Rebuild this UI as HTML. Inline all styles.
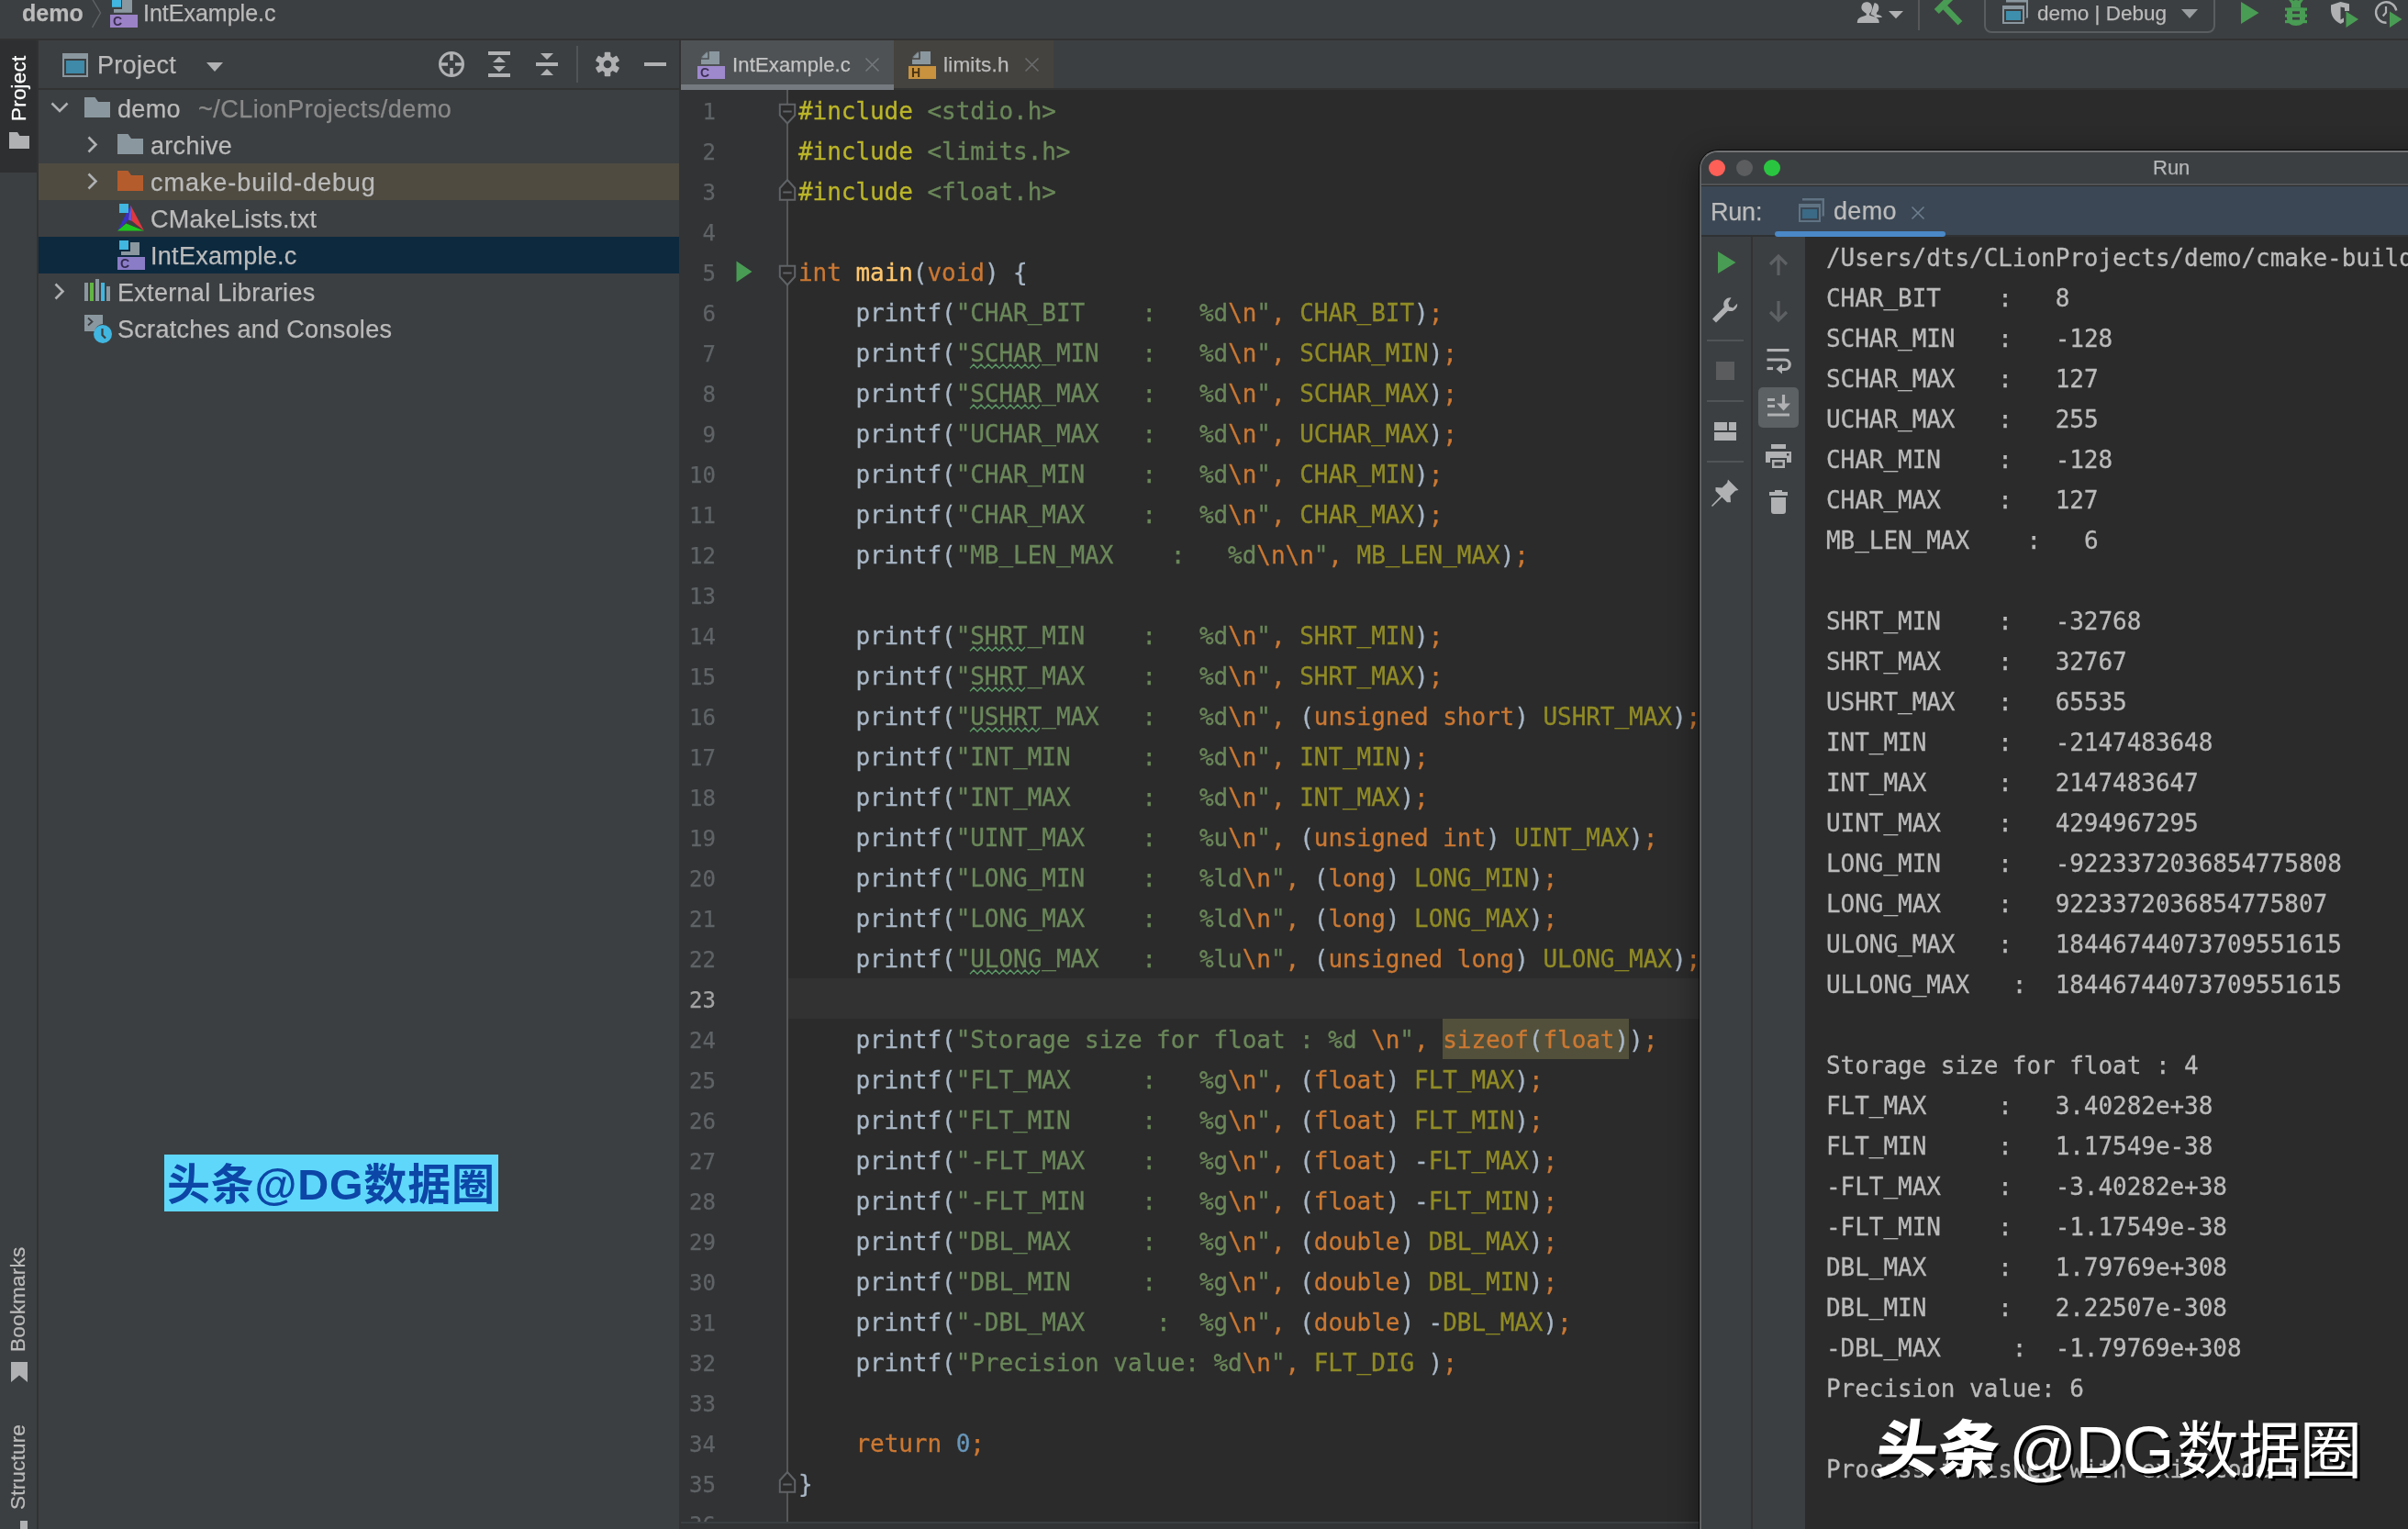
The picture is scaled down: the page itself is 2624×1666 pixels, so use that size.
<!DOCTYPE html>
<html lang="zh"><head><meta charset="utf-8"><title>demo – IntExample.c</title>
<style>
*{box-sizing:border-box}
html,body{margin:0;padding:0}
body{width:2624px;height:1666px;overflow:hidden;position:relative;background:#3c3f41;font-family:"Liberation Sans","Noto Sans CJK SC",sans-serif;color:#bbbbbb;font-size:27px;letter-spacing:.3px;-webkit-text-stroke:.25px currentColor}
#root{position:absolute;left:0;top:0;width:2624px;height:1666px;overflow:hidden;will-change:transform}
.abs{position:absolute}
.t{position:absolute;white-space:pre;line-height:1}
svg{position:absolute;overflow:visible}
/* nav */
#nav{left:0;top:0;width:2624px;height:44px;background:#3c3f41;border-bottom:2px solid #323232}
/* stripe */
#stripe{left:0;top:44px;width:42px;height:1622px;background:#3c3f41;border-right:2px solid #323232}
#stripeact{left:0;top:44px;width:40px;height:144px;background:#2d2f30}
.vt{position:absolute;white-space:pre;transform-origin:0 0;transform:rotate(-90deg);font-size:24px;line-height:24px;letter-spacing:.2px}
/* project */
#proj{left:42px;top:44px;width:700px;height:1622px;background:#3c3f41;border-right:2px solid #323232}
#projhead{left:42px;top:44px;width:698px;height:54px;border-bottom:2px solid #323232}
.row{position:absolute;left:42px;width:698px;height:40px}
.rt{position:absolute;top:4px;line-height:32px;white-space:pre}
/* editor */
#tabs{left:742px;top:44px;width:1882px;height:54px;background:#3c3f41;border-bottom:2px solid #323232}
#tab1{left:742px;top:44px;width:232px;height:54px;background:#4e5254;border-bottom:6px solid #747a80}
#tab2{left:974px;top:44px;width:174px;height:52px;background:#45433f}
#gutter{left:740px;top:98px;width:118px;height:1560px;background:#313335}
#ed{left:858px;top:98px;width:1766px;height:1560px;background:#2b2b2b}
#foldline{left:857px;top:98px;width:2px;height:1560px;background:#555759}
.ln{position:absolute;left:742px;width:38px;text-align:right;font-family:"DejaVu Sans Mono","Liberation Mono",monospace;font-size:24px;letter-spacing:0;color:#606366;line-height:44px;height:44px;white-space:pre}
.cl{position:absolute;left:870px;font-family:"DejaVu Sans Mono","Liberation Mono",monospace;font-size:26px;letter-spacing:-.05px;color:#a9b7c6;line-height:44px;height:44px;white-space:pre}
.cl,.co{-webkit-text-stroke:.3px currentColor}
.cl span{-webkit-text-stroke:.3px currentColor}
.k{color:#cc7832}.s{color:#6a8759}.m{color:#908b25}.p{color:#bbb529}.f{color:#ffc66d}.n{color:#6897bb}
.u{position:relative;top:-2.5px}
.w{background:#52503a;padding:8px 0 6px}
.sq{text-decoration:underline wavy #5fa36a 1.2px;text-underline-offset:3.5px;text-decoration-skip-ink:none}
#edbot{left:742px;top:1658px;width:1882px;height:8px;background:#313335;border-top:2px solid #3c3f41}
/* run window */
#runshadow{left:1852px;top:164px;width:900px;height:1700px;border-radius:20px;box-shadow:0 0 0 1px rgba(0,0,0,.75),0 8px 30px 2px rgba(0,0,0,.42)}
#run{left:1852px;top:164px;width:900px;height:1700px;border-radius:20px 0 0 0;background:#2b2b2b;overflow:hidden;border-top:2px solid #707274;border-left:2px solid #5f6163}
.co{position:absolute;left:1990px;font-family:"DejaVu Sans Mono","Liberation Mono",monospace;font-size:26px;letter-spacing:-.05px;color:#bbbbbb;line-height:44px;height:44px;white-space:pre}
</style></head>
<body>
<div id="root">
<!-- navigation bar -->
<div class="abs" id="nav"></div>
<div class="t" style="left:24px;top:0px;font-size:25px;line-height:28px;font-weight:bold;letter-spacing:0">demo</div>
<svg style="left:98px;top:0" width="16" height="32"><polyline points="2,-2 11.5,14 2.5,30" fill="none" stroke="#5e6366" stroke-width="1.4"/></svg>
<svg style="left:120px;top:0" width="30" height="30"><rect x="4" y="-4" width="20" height="17.8" fill="#8a979f"/><rect x="0" y="-4" width="13" height="14" fill="#3c3f41"/><rect x="2" y="-4" width="10" height="11.8" fill="#40b6e0"/><rect x="0" y="16" width="30" height="14" fill="#9b82c6"/><text x="3" y="28" font-family="Liberation Sans,sans-serif" font-weight="bold" font-size="14" fill="#3c2d52">C</text></svg>
<div class="t" style="left:156px;top:0px;font-size:25px;line-height:28px;letter-spacing:0">IntExample.c</div>
<svg style="left:2022px;top:0" width="56" height="30" fill="#afb1b3"><path d="M20.5 3.2c3 0 4.8 2.2 4.8 5.2 0 2.3-1 4.3-2.3 5.3l-.2 1.7c3.2.9 5.6 1.4 6.2 3.5h-7.6c-.9-1.7-3-2.5-5-3.1z"/><path d="M12.2 2.2c3.600 0 5.8 2.600 5.8 6.200 0 2.800-1.300 5.100-2.900 6.300l.2 2.100c4.400 1.300 9.300 2.100 10.100 5.600.2.900.3 1.700.3 2.600H1.800c0-.9.100-1.700.3-2.600.8-3.500 5.100-4.300 9.500-5.600l.2-2.100C10.200 13.500 6.400 11.200 6.400 8.400c0-3.600 2.200-6.200 5.800-6.200z"/><path d="M36 12h16l-8 8.300z"/></svg>
<div class="abs" style="left:2090px;top:0;width:2px;height:33px;background:#555759"></div>
<svg style="left:2106px;top:0" width="34" height="30"><g stroke="#499c54" fill="none"><path d="M4.300 12.500L21 -4" stroke-width="7.200"/><path d="M13.500 8L30 25.300" stroke-width="6.600"/></g></svg>
<div class="abs" style="left:2162px;top:-10px;width:252px;height:46px;border:2px solid #5a5d5f;border-radius:8px"></div>
<svg style="left:2182px;top:0" width="30" height="28"><rect x="4" y="-4" width="24" height="23.500" fill="#8a979f"/><rect x="4" y="2.500" width="22" height="17" fill="#3c3f41"/><rect x="0" y="6" width="24" height="20" fill="#8a979f"/><rect x="2" y="10" width="20" height="14" fill="#3c3f41"/><rect x="4" y="12" width="16" height="10" fill="#3e8fad"/></svg>
<div class="t" style="left:2220px;top:2px;font-size:22.5px;line-height:26px;letter-spacing:0">demo | Debug</div>
<svg style="left:2377px;top:10px" width="18" height="10"><path d="M0 0h18l-9 10z" fill="#9a9da0"/></svg>
<svg style="left:2441px;top:0" width="22" height="28"><path d="M1 2l19.500 12L1 26z" fill="#499c54"/></svg>
<svg style="left:2489px;top:0" width="26" height="30"><g fill="#499c54"><path d="M6.500 8.500h13c2.200 0 3.500 2 3.500 5v6c0 5-4.500 8.500-10 8.500S3 24.500 3 19.500v-6c0-3 1.300-5 3.500-5z"/><path d="M8 4.500a5 4.500 0 0 1 10 0v4H8z"/><path d="M6.500 -1l5 7M19.500 -1l-5 7" stroke="#499c54" stroke-width="3.400" fill="none"/><rect x="1" y="8.500" width="24" height="3.200"/><rect x="1" y="15.500" width="24" height="3.200"/><rect x="1" y="22" width="24" height="3.200"/></g><rect x="9" y="12.300" width="8" height="2.800" fill="#3c3f41"/><rect x="9" y="18.800" width="8" height="2.800" fill="#3c3f41"/></svg>
<svg style="left:2539px;top:0" width="32" height="32"><path d="M1 5.500L11.500 2 21 4.300V12h-5V8.500l-4.500-1V21.500l3.500-2v4.500L11.500 26C4.500 22.500 1 17 1 10z" fill="#afb1b3"/><path d="M17.500 12.500L31 21l-13.500 9z" fill="#499c54"/></svg>
<svg style="left:2587px;top:0" width="32" height="32"><path d="M24.300 11.500A11.200 11.200 0 1 0 13.500 24.700" fill="none" stroke="#afb1b3" stroke-width="2.400"/><path d="M13 7v6.700l-3.300 3.800" fill="none" stroke="#afb1b3" stroke-width="2.200"/><path d="M17 12.500L30.500 21 17 30z" fill="#499c54"/></svg>
<!-- left tool window stripe -->
<div class="abs" id="stripe"></div>
<div class="abs" id="stripeact"></div>
<div class="vt" style="left:8.5px;top:132px;color:#ffffff;font-size:22.5px">Project</div>
<svg style="left:10px;top:144px" width="22" height="18"><path d="M0 0h9l2.500 4H22v14H0z" fill="#afb1b3"/></svg>
<div class="vt" style="left:8px;top:1473px;color:#bbbbbb;font-size:22.5px">Bookmarks</div>
<svg style="left:12px;top:1484px" width="18" height="22"><path d="M0 0h18v22l-9-7.500L0 22z" fill="#afb1b3"/></svg>
<div class="vt" style="left:8px;top:1645px;color:#bbbbbb;font-size:22.5px">Structure</div>
<svg style="left:14px;top:1657px" width="18" height="10"><rect x="8" y="0" width="8" height="10" fill="#afb1b3"/></svg>
<!-- project tool window -->
<div class="abs" id="proj"></div>
<div class="abs" id="projhead"></div>
<svg style="left:68px;top:58px" width="28" height="26"><rect width="28" height="26" fill="#8a979f"/><rect x="2" y="6" width="24" height="18" fill="#3c3f41"/><rect x="4" y="8" width="20" height="14" fill="#3e8aa8"/></svg>
<div class="t" style="left:106px;top:55px;line-height:32px">Project</div>
<svg style="left:225px;top:68px" width="18" height="10"><path d="M0 0h18l-9 10z" fill="#afb1b3"/></svg>
<svg style="left:478px;top:56px" width="28" height="28"><g fill="none" stroke="#afb1b3" stroke-width="3"><circle cx="14" cy="14" r="12.500"/><path d="M14 1v9M14 18v9M1 14h9M18 14h9" stroke-width="3.600"/></g></svg>
<svg style="left:532px;top:56px" width="24" height="28" fill="#afb1b3"><rect x="0" y="0" width="24" height="4"/><rect x="0" y="24" width="24" height="4"/><path d="M5 12h14L12 5.500z"/><path d="M5 16h14l-7 6.500z"/></svg>
<svg style="left:584px;top:57px" width="24" height="26" fill="#afb1b3"><rect x="0" y="11" width="24" height="4"/><path d="M5 1h14l-7 7z"/><path d="M5 25h14l-7-7z"/></svg>
<div class="abs" style="left:628px;top:50px;width:2px;height:40px;background:#515456"></div>
<svg style="left:649px;top:56px" width="26" height="28" viewBox="-13 -14 26 28"><g fill="#afb1b3"><circle r="9.200"/><rect x="-3.300" y="-13.300" width="6.600" height="7" rx="1" transform="rotate(0)"/><rect x="-3.300" y="-13.300" width="6.600" height="7" rx="1" transform="rotate(60)"/><rect x="-3.300" y="-13.300" width="6.600" height="7" rx="1" transform="rotate(120)"/><rect x="-3.300" y="-13.300" width="6.600" height="7" rx="1" transform="rotate(180)"/><rect x="-3.300" y="-13.300" width="6.600" height="7" rx="1" transform="rotate(240)"/><rect x="-3.300" y="-13.300" width="6.600" height="7" rx="1" transform="rotate(300)"/></g><circle r="4.300" fill="#3c3f41"/></svg>
<div class="abs" style="left:702px;top:68px;width:24px;height:4px;background:#afb1b3"></div>
<div class="row" style="top:178px;background:#4f4b41"></div>
<div class="row" style="top:258px;background:#0d293e"></div>
<svg style="left:55px;top:111px" width="20" height="12"><polyline points="1.500,1.500 10,10 18.500,1.500" fill="none" stroke="#afb1b3" stroke-width="2.600"/></svg><svg style="left:92px;top:106px" width="28" height="22"><path d="M0 0h11.500l3.500 5H28v17H0z" fill="#8a979f"/></svg><div class="t" style="left:128px;top:103px;line-height:32px">demo</div><div class="t" style="left:216px;top:103px;line-height:32px;color:#8a8a8a;letter-spacing:0.5px">~/CLionProjects/demo</div>
<svg style="left:95px;top:148px" width="12" height="19"><polyline points="1.500,1.500 9.500,9.500 1.500,17.500" fill="none" stroke="#afb1b3" stroke-width="2.600"/></svg><svg style="left:128px;top:146px" width="28" height="22"><path d="M0 0h11.500l3.500 5H28v17H0z" fill="#8a979f"/></svg><div class="t" style="left:164px;top:143px;line-height:32px">archive</div>
<svg style="left:95px;top:188px" width="12" height="19"><polyline points="1.500,1.500 9.500,9.500 1.500,17.500" fill="none" stroke="#afb1b3" stroke-width="2.600"/></svg><svg style="left:128px;top:186px" width="28" height="22"><path d="M0 0h11.500l3.500 5H28v17H0z" fill="#b55c2c"/></svg><div class="t" style="left:164px;top:183px;line-height:32px;letter-spacing:0.95px">cmake-build-debug</div>
<svg style="left:128px;top:222px" width="30" height="30"><path d="M14.200 1.500L0 29.500l12-12z" fill="#3a30c8"/><path d="M14.200 1.500L16 19l13 10.500z" fill="#e0383e"/><path d="M0 29.500h29L9.500 21.500z" fill="#1ec81e"/><path d="M14.200 1.500l1.800 17.500-4-1.500z" fill="#6a55d8"/><rect x="2" y="0" width="10" height="10" fill="#40b6e0"/></svg><div class="t" style="left:164px;top:223px;line-height:32px">CMakeLists.txt</div>
<svg style="left:128px;top:262px" width="30" height="32"><rect x="4" y="2" width="20" height="14" fill="#8a979f"/><rect x="0" y="0" width="14" height="12" fill="#0d293e"/><rect x="2" y="0" width="10" height="10" fill="#40b6e0"/><rect x="0" y="18" width="30" height="14" fill="#8a7cc6"/><text x="3" y="30" font-family="Liberation Sans,sans-serif" font-weight="bold" font-size="14" fill="#332a52">C</text></svg><div class="t" style="left:164px;top:263px;line-height:32px">IntExample.c</div>
<svg style="left:59px;top:308px" width="12" height="19"><polyline points="1.500,1.500 9.500,9.500 1.500,17.500" fill="none" stroke="#afb1b3" stroke-width="2.600"/></svg><svg style="left:92px;top:303px" width="28" height="26"><rect x="0" y="5" width="4" height="20" fill="#8a979f"/><rect x="6" y="5" width="4" height="20" fill="#62b543"/><rect x="12" y="1" width="4" height="24" fill="#8a979f"/><rect x="18" y="5" width="4" height="20" fill="#40b6e0"/><rect x="24" y="9" width="4" height="16" fill="#8a979f"/></svg><div class="t" style="left:128px;top:303px;line-height:32px">External Libraries</div>
<svg style="left:92px;top:343px" width="32" height="32"><path d="M0 0h20v10a10 10 0 0 0 -9 8H0z" fill="#8a979f"/><polyline points="4,3.500 8.500,7.500 4,11.500" fill="none" stroke="#3c3f41" stroke-width="1.800"/><circle cx="20" cy="21" r="10" fill="#40b6e0"/><path d="M19.500 15v7l3.500 3.500" fill="none" stroke="#3c3f41" stroke-width="2.200"/></svg><div class="t" style="left:128px;top:343px;line-height:32px">Scratches and Consoles</div>
<!-- editor -->
<div class="abs" id="tabs"></div>
<div class="abs" id="tab1"></div>
<div class="abs" id="tab2"></div>
<div class="abs" id="gutter"></div>
<div class="abs" id="ed"></div>
<div class="abs" style="left:858px;top:1066px;width:1766px;height:44px;background:#323232"></div>
<div class="abs" id="foldline"></div>
<div class="ln" style="top:100px">1</div><div class="cl" style="top:99px"><span class="p">#include</span> <span class="s">&lt;stdio.h&gt;</span></div>
<div class="ln" style="top:144px">2</div><div class="cl" style="top:143px"><span class="p">#include</span> <span class="s">&lt;limits.h&gt;</span></div>
<div class="ln" style="top:188px">3</div><div class="cl" style="top:187px"><span class="p">#include</span> <span class="s">&lt;float.h&gt;</span></div>
<div class="ln" style="top:232px">4</div>
<div class="ln" style="top:276px">5</div><div class="cl" style="top:275px"><span class="k">int</span> <span class="f">main</span>(<span class="k">void</span>) {</div>
<div class="ln" style="top:320px">6</div><div class="cl" style="top:319px">    printf(<span class="s">"CHAR<span class="u">_</span>BIT    :   %d</span><span class="k">\n</span><span class="s">"</span><span class="k">,</span> <span class="m">CHAR<span class="u">_</span>BIT</span>)<span class="k">;</span></div>
<div class="ln" style="top:364px">7</div><div class="cl" style="top:363px">    printf(<span class="s">"SCHAR<span class="u">_</span>MIN   :   %d</span><span class="k">\n</span><span class="s">"</span><span class="k">,</span> <span class="m">SCHAR<span class="u">_</span>MIN</span>)<span class="k">;</span></div>
<div class="ln" style="top:408px">8</div><div class="cl" style="top:407px">    printf(<span class="s">"SCHAR<span class="u">_</span>MAX   :   %d</span><span class="k">\n</span><span class="s">"</span><span class="k">,</span> <span class="m">SCHAR<span class="u">_</span>MAX</span>)<span class="k">;</span></div>
<div class="ln" style="top:452px">9</div><div class="cl" style="top:451px">    printf(<span class="s">"UCHAR<span class="u">_</span>MAX   :   %d</span><span class="k">\n</span><span class="s">"</span><span class="k">,</span> <span class="m">UCHAR<span class="u">_</span>MAX</span>)<span class="k">;</span></div>
<div class="ln" style="top:496px">10</div><div class="cl" style="top:495px">    printf(<span class="s">"CHAR<span class="u">_</span>MIN    :   %d</span><span class="k">\n</span><span class="s">"</span><span class="k">,</span> <span class="m">CHAR<span class="u">_</span>MIN</span>)<span class="k">;</span></div>
<div class="ln" style="top:540px">11</div><div class="cl" style="top:539px">    printf(<span class="s">"CHAR<span class="u">_</span>MAX    :   %d</span><span class="k">\n</span><span class="s">"</span><span class="k">,</span> <span class="m">CHAR<span class="u">_</span>MAX</span>)<span class="k">;</span></div>
<div class="ln" style="top:584px">12</div><div class="cl" style="top:583px">    printf(<span class="s">"MB<span class="u">_</span>LEN<span class="u">_</span>MAX    :   %d</span><span class="k">\n\n</span><span class="s">"</span><span class="k">,</span> <span class="m">MB<span class="u">_</span>LEN<span class="u">_</span>MAX</span>)<span class="k">;</span></div>
<div class="ln" style="top:628px">13</div>
<div class="ln" style="top:672px">14</div><div class="cl" style="top:671px">    printf(<span class="s">"SHRT<span class="u">_</span>MIN    :   %d</span><span class="k">\n</span><span class="s">"</span><span class="k">,</span> <span class="m">SHRT<span class="u">_</span>MIN</span>)<span class="k">;</span></div>
<div class="ln" style="top:716px">15</div><div class="cl" style="top:715px">    printf(<span class="s">"SHRT<span class="u">_</span>MAX    :   %d</span><span class="k">\n</span><span class="s">"</span><span class="k">,</span> <span class="m">SHRT<span class="u">_</span>MAX</span>)<span class="k">;</span></div>
<div class="ln" style="top:760px">16</div><div class="cl" style="top:759px">    printf(<span class="s">"USHRT<span class="u">_</span>MAX   :   %d</span><span class="k">\n</span><span class="s">"</span><span class="k">,</span> (<span class="k">unsigned short</span>) <span class="m">USHRT<span class="u">_</span>MAX</span>)<span class="k">;</span></div>
<div class="ln" style="top:804px">17</div><div class="cl" style="top:803px">    printf(<span class="s">"INT<span class="u">_</span>MIN     :   %d</span><span class="k">\n</span><span class="s">"</span><span class="k">,</span> <span class="m">INT<span class="u">_</span>MIN</span>)<span class="k">;</span></div>
<div class="ln" style="top:848px">18</div><div class="cl" style="top:847px">    printf(<span class="s">"INT<span class="u">_</span>MAX     :   %d</span><span class="k">\n</span><span class="s">"</span><span class="k">,</span> <span class="m">INT<span class="u">_</span>MAX</span>)<span class="k">;</span></div>
<div class="ln" style="top:892px">19</div><div class="cl" style="top:891px">    printf(<span class="s">"UINT<span class="u">_</span>MAX    :   %u</span><span class="k">\n</span><span class="s">"</span><span class="k">,</span> (<span class="k">unsigned int</span>) <span class="m">UINT<span class="u">_</span>MAX</span>)<span class="k">;</span></div>
<div class="ln" style="top:936px">20</div><div class="cl" style="top:935px">    printf(<span class="s">"LONG<span class="u">_</span>MIN    :   %ld</span><span class="k">\n</span><span class="s">"</span><span class="k">,</span> (<span class="k">long</span>) <span class="m">LONG<span class="u">_</span>MIN</span>)<span class="k">;</span></div>
<div class="ln" style="top:980px">21</div><div class="cl" style="top:979px">    printf(<span class="s">"LONG<span class="u">_</span>MAX    :   %ld</span><span class="k">\n</span><span class="s">"</span><span class="k">,</span> (<span class="k">long</span>) <span class="m">LONG<span class="u">_</span>MAX</span>)<span class="k">;</span></div>
<div class="ln" style="top:1024px">22</div><div class="cl" style="top:1023px">    printf(<span class="s">"ULONG<span class="u">_</span>MAX   :   %lu</span><span class="k">\n</span><span class="s">"</span><span class="k">,</span> (<span class="k">unsigned long</span>) <span class="m">ULONG<span class="u">_</span>MAX</span>)<span class="k">;</span></div>
<div class="ln" style="top:1068px;color:#a4a3a3">23</div>
<div class="ln" style="top:1112px">24</div><div class="cl" style="top:1111px">    printf(<span class="s">"Storage size for float : %d </span><span class="k">\n</span><span class="s">"</span><span class="k">,</span> <span class="w"><span class="k">sizeof</span>(<span class="k">float</span>)</span>)<span class="k">;</span></div>
<div class="ln" style="top:1156px">25</div><div class="cl" style="top:1155px">    printf(<span class="s">"FLT<span class="u">_</span>MAX     :   %g</span><span class="k">\n</span><span class="s">"</span><span class="k">,</span> (<span class="k">float</span>) <span class="m">FLT<span class="u">_</span>MAX</span>)<span class="k">;</span></div>
<div class="ln" style="top:1200px">26</div><div class="cl" style="top:1199px">    printf(<span class="s">"FLT<span class="u">_</span>MIN     :   %g</span><span class="k">\n</span><span class="s">"</span><span class="k">,</span> (<span class="k">float</span>) <span class="m">FLT<span class="u">_</span>MIN</span>)<span class="k">;</span></div>
<div class="ln" style="top:1244px">27</div><div class="cl" style="top:1243px">    printf(<span class="s">"-FLT<span class="u">_</span>MAX    :   %g</span><span class="k">\n</span><span class="s">"</span><span class="k">,</span> (<span class="k">float</span>) -<span class="m">FLT<span class="u">_</span>MAX</span>)<span class="k">;</span></div>
<div class="ln" style="top:1288px">28</div><div class="cl" style="top:1287px">    printf(<span class="s">"-FLT<span class="u">_</span>MIN    :   %g</span><span class="k">\n</span><span class="s">"</span><span class="k">,</span> (<span class="k">float</span>) -<span class="m">FLT<span class="u">_</span>MIN</span>)<span class="k">;</span></div>
<div class="ln" style="top:1332px">29</div><div class="cl" style="top:1331px">    printf(<span class="s">"DBL<span class="u">_</span>MAX     :   %g</span><span class="k">\n</span><span class="s">"</span><span class="k">,</span> (<span class="k">double</span>) <span class="m">DBL<span class="u">_</span>MAX</span>)<span class="k">;</span></div>
<div class="ln" style="top:1376px">30</div><div class="cl" style="top:1375px">    printf(<span class="s">"DBL<span class="u">_</span>MIN     :   %g</span><span class="k">\n</span><span class="s">"</span><span class="k">,</span> (<span class="k">double</span>) <span class="m">DBL<span class="u">_</span>MIN</span>)<span class="k">;</span></div>
<div class="ln" style="top:1420px">31</div><div class="cl" style="top:1419px">    printf(<span class="s">"-DBL<span class="u">_</span>MAX     :  %g</span><span class="k">\n</span><span class="s">"</span><span class="k">,</span> (<span class="k">double</span>) -<span class="m">DBL<span class="u">_</span>MAX</span>)<span class="k">;</span></div>
<div class="ln" style="top:1464px">32</div><div class="cl" style="top:1463px">    printf(<span class="s">"Precision value: %d</span><span class="k">\n</span><span class="s">"</span><span class="k">,</span> <span class="m">FLT<span class="u">_</span>DIG</span> )<span class="k">;</span></div>
<div class="ln" style="top:1508px">33</div>
<div class="ln" style="top:1552px">34</div><div class="cl" style="top:1551px">    <span class="k">return</span> <span class="n">0</span><span class="k">;</span></div>
<div class="ln" style="top:1596px">35</div><div class="cl" style="top:1595px">}</div>
<div class="ln" style="top:1640px">36</div>
<svg style="left:1056.7px;top:396px" width="79" height="7"><polyline points="0,5.2 4,1 8,5.2 12,1 16,5.2 20,1 24,5.2 28,1 32,5.2 36,1 40,5.2 44,1 48,5.2 52,1 56,5.2 60,1 64,5.2 68,1 72,5.2 76,1" fill="none" stroke="#5c9966" stroke-width="1.400"/></svg>
<svg style="left:1056.7px;top:440px" width="79" height="7"><polyline points="0,5.2 4,1 8,5.2 12,1 16,5.2 20,1 24,5.2 28,1 32,5.2 36,1 40,5.2 44,1 48,5.2 52,1 56,5.2 60,1 64,5.2 68,1 72,5.2 76,1" fill="none" stroke="#5c9966" stroke-width="1.400"/></svg>
<svg style="left:1056.7px;top:704px" width="63.4" height="7"><polyline points="0,5.2 4,1 8,5.2 12,1 16,5.2 20,1 24,5.2 28,1 32,5.2 36,1 40,5.2 44,1 48,5.2 52,1 56,5.2 60,1" fill="none" stroke="#5c9966" stroke-width="1.400"/></svg>
<svg style="left:1056.7px;top:748px" width="63.4" height="7"><polyline points="0,5.2 4,1 8,5.2 12,1 16,5.2 20,1 24,5.2 28,1 32,5.2 36,1 40,5.2 44,1 48,5.2 52,1 56,5.2 60,1" fill="none" stroke="#5c9966" stroke-width="1.400"/></svg>
<svg style="left:1056.7px;top:792px" width="79" height="7"><polyline points="0,5.2 4,1 8,5.2 12,1 16,5.2 20,1 24,5.2 28,1 32,5.2 36,1 40,5.2 44,1 48,5.2 52,1 56,5.2 60,1 64,5.2 68,1 72,5.2 76,1" fill="none" stroke="#5c9966" stroke-width="1.400"/></svg>
<svg style="left:1056.7px;top:1056px" width="79" height="7"><polyline points="0,5.2 4,1 8,5.2 12,1 16,5.2 20,1 24,5.2 28,1 32,5.2 36,1 40,5.2 44,1 48,5.2 52,1 56,5.2 60,1 64,5.2 68,1 72,5.2 76,1" fill="none" stroke="#5c9966" stroke-width="1.400"/></svg>
<div class="abs" id="edbot"></div>
<svg style="left:760px;top:56px" width="30" height="30"><path d="M12 0h12v14H4V8z" fill="#8a979f"/><path d="M10.500 0v6.500H4z" fill="#8a979f" opacity=".75"/><path d="M4 8h8V0" fill="none" stroke="#4e5254" stroke-width="1.600"/><rect x="0" y="16" width="30" height="14" fill="#9f89cd"/><text x="3" y="28" font-family="Liberation Sans,sans-serif" font-weight="bold" font-size="14" fill="#3d2f57">C</text></svg><div class="t" style="left:798px;top:56.5px;font-size:22px;line-height:28px;letter-spacing:.15px;color:#c4c4c4">IntExample.c</div><svg style="left:943px;top:63px" width="15" height="15"><path d="M0.500 0.500l14 14M14.500 0.500l-14 14" stroke="#72777b" stroke-width="1.700" fill="none"/></svg>
<svg style="left:990px;top:56px" width="30" height="30"><path d="M12 0h12v14H4V8z" fill="#8a979f"/><path d="M10.500 0v6.500H4z" fill="#8a979f" opacity=".75"/><path d="M4 8h8V0" fill="none" stroke="#45433f" stroke-width="1.600"/><rect x="0" y="16" width="30" height="14" fill="#c8923f"/><text x="3" y="28" font-family="Liberation Sans,sans-serif" font-weight="bold" font-size="14" fill="#4a3312">H</text></svg><div class="t" style="left:1028px;top:56.5px;font-size:22.5px;line-height:28px;letter-spacing:.2px">limits.h</div><svg style="left:1117px;top:63px" width="15" height="15"><path d="M0.500 0.500l14 14M14.500 0.500l-14 14" stroke="#696b6b" stroke-width="1.700" fill="none"/></svg>
<svg style="left:849px;top:113px" width="18" height="23"><path d="M0.800 0.800h16.400v11.700L9 21.500 0.800 12.500z" fill="#2b2b2b" stroke="#606366" stroke-width="2"/><path d="M4.300 8.500h9.400" stroke="#606366" stroke-width="2"/></svg><svg style="left:849px;top:194.7px" width="18" height="24"><path d="M0.800 22.700h16.400V10L9 1 0.800 10z" fill="#2b2b2b" stroke="#606366" stroke-width="2"/><path d="M4.300 14.500h9.400" stroke="#606366" stroke-width="2"/></svg><svg style="left:849px;top:289px" width="18" height="23"><path d="M0.800 0.800h16.400v11.700L9 21.500 0.800 12.500z" fill="#2b2b2b" stroke="#606366" stroke-width="2"/><path d="M4.300 8.500h9.400" stroke="#606366" stroke-width="2"/></svg><svg style="left:849px;top:1602.7px" width="18" height="24"><path d="M0.800 22.700h16.400V10L9 1 0.800 10z" fill="#2b2b2b" stroke="#606366" stroke-width="2"/><path d="M4.300 14.500h9.400" stroke="#606366" stroke-width="2"/></svg>
<svg style="left:802px;top:284px" width="18" height="24"><path d="M0.500 0.500L17.500 12 0.500 23.500z" fill="#499c54"/></svg>
<!-- floating Run tool window -->
<div class="abs" id="runshadow"></div>
<div class="abs" id="run">
<div class="abs" style="left:-1854px;top:-166px;width:2624px;height:1666px">
<div class="abs" style="left:1852px;top:164px;width:800px;height:38px;background:#3c3f41;border-bottom:2px solid #515355"></div>
<div class="abs" style="left:1862px;top:174px;width:18px;height:18px;border-radius:50%;background:#fe5f57"></div><div class="abs" style="left:1892px;top:174px;width:18px;height:18px;border-radius:50%;background:#5b5d5f"></div><div class="abs" style="left:1922px;top:174px;width:18px;height:18px;border-radius:50%;background:#2ac540"></div>
<div class="t" style="left:2346px;top:167.5px;font-size:22px;line-height:30px;letter-spacing:0;color:#b4b6b8">Run</div>
<div class="abs" style="left:1852px;top:203px;width:800px;height:55px;background:#3b4754;border-bottom:2px solid #2f3133"></div>
<div class="t" style="left:1864px;top:215px;line-height:32px;letter-spacing:-.2px">Run:</div>
<svg style="left:1960px;top:216px" width="28" height="26"><rect x="4" y="0" width="24" height="19.500" fill="#5f7383"/><rect x="4" y="2.500" width="21.500" height="17" fill="#3b4754"/><rect x="0" y="6" width="24" height="20" fill="#5f7383"/><rect x="2" y="10" width="20" height="14" fill="#3b4754"/><rect x="4" y="12" width="16" height="10" fill="#3a6a86"/></svg>
<div class="t" style="left:1998px;top:214px;line-height:32px">demo</div>
<svg style="left:2083px;top:225px" width="14" height="14"><path d="M0.500 0.500l13 13M13.500 0.500l-13 13" stroke="#6d7e8e" stroke-width="1.600" fill="none"/></svg>
<div class="abs" style="left:1934px;top:252px;width:186px;height:6px;border-radius:3px;background:#4a88c7"></div>
<div class="abs" style="left:1852px;top:258px;width:58px;height:1408px;background:#3c3f41;border-right:2px solid #323232"></div>
<div class="abs" style="left:1910px;top:258px;width:57px;height:1408px;background:#3c3f41"></div>
<svg style="left:1872px;top:274px" width="20" height="24"><path d="M0 0l19.500 12L0 24z" fill="#499c54"/></svg>
<svg style="left:1866px;top:324px" width="28" height="28"><g fill="#afb1b3"><path d="M0 24.500L14 10.500l4 4L4 28.500z" transform="translate(0,-1)"/><path d="M20.500 0.200c-4.500-.6-8.300 3-8.300 7.300 0 4.200 3.400 7.600 7.600 7.600 4.300 0 7.900-3.800 7.300-8.300l-4.600 4.600-4.200-1.100-1.100-4.200z"/></g></svg>
<div class="abs" style="left:1860px;top:370px;width:40px;height:2px;background:#515456"></div>
<div class="abs" style="left:1870px;top:394px;width:20px;height:20px;background:#5a5c5e"></div>
<div class="abs" style="left:1860px;top:436px;width:40px;height:2px;background:#515456"></div>
<svg style="left:1868px;top:460px" width="24" height="20" fill="#afb1b3"><rect x="0" y="0" width="14" height="9"/><rect x="16" y="0" width="8" height="9"/><rect x="0" y="11" width="24" height="9"/></svg>
<div class="abs" style="left:1860px;top:502px;width:40px;height:2px;background:#515456"></div>
<svg style="left:1865px;top:522px" width="30" height="30"><g fill="#afb1b3"><path d="M18 0.500L29.500 12l-3.500 .8-5.500 5.500 .5 7-4 0-5.500-5.500L1 30 0 29l10-10.500L4.500 13l0-4 7 .5L17.200 4z"/></g></svg>
<svg style="left:1927px;top:276px" width="22" height="24"><path d="M11 24V3M2 12l9-9 9 9" fill="none" stroke="#5e6163" stroke-width="3.200"/></svg>
<svg style="left:1927px;top:328px" width="22" height="24"><path d="M11 0v21M2 12l9 9 9-9" fill="none" stroke="#5e6163" stroke-width="3.200"/></svg>
<svg style="left:1925px;top:379px" width="28" height="30"><g fill="none" stroke="#afb1b3" stroke-width="3.200"><path d="M0.500 2.500h24"/><path d="M0.500 13h19.500a5 5 0 0 1 0 10.500h-6"/><path d="M0.500 22.500h6.500"/></g><path d="M17 17.500v11l-6.500-5.500z" fill="#afb1b3"/></svg>
<div class="abs" style="left:1916px;top:422px;width:44px;height:44px;border-radius:5px;background:#5c6164"></div>
<svg style="left:1926px;top:430px" width="26" height="24"><g fill="none" stroke="#afb1b3" stroke-width="3.200"><path d="M0 5.500h8M0 12.500h8M0 22h24"/><path d="M17.500 0v14"/></g><path d="M10 9.500h15l-7.500 8z" fill="#afb1b3"/></svg>
<svg style="left:1924px;top:484px" width="28" height="26" fill="#afb1b3"><rect x="6" y="0" width="16" height="5"/><path d="M0 8h28v12h-5v-5H5v5H0z"/><path d="M7 17h14v9H7zM9.500 19.500v4h9v-4z" fill-rule="evenodd"/><rect x="23" y="10" width="2.500" height="2.500" fill="#3c3f41"/></svg>
<svg style="left:1928px;top:534px" width="20" height="26" fill="#afb1b3"><rect x="6" y="0" width="8" height="3"/><rect x="0" y="2" width="20" height="4"/><path d="M2 8h16v15a3 3 0 0 1 -3 3H5a3 3 0 0 1 -3 -3z"/></svg>
<div class="abs" style="left:1967px;top:258px;width:700px;height:1408px;background:#2b2b2b"></div>
<div class="co" style="top:259px">/Users/dts/CLionProjects/demo/cmake-build-debug/demo</div>
<div class="co" style="top:303px">CHAR<span class="u">_</span>BIT    :   8</div>
<div class="co" style="top:347px">SCHAR<span class="u">_</span>MIN   :   -128</div>
<div class="co" style="top:391px">SCHAR<span class="u">_</span>MAX   :   127</div>
<div class="co" style="top:435px">UCHAR<span class="u">_</span>MAX   :   255</div>
<div class="co" style="top:479px">CHAR<span class="u">_</span>MIN    :   -128</div>
<div class="co" style="top:523px">CHAR<span class="u">_</span>MAX    :   127</div>
<div class="co" style="top:567px">MB<span class="u">_</span>LEN<span class="u">_</span>MAX    :   6</div>
<div class="co" style="top:655px">SHRT<span class="u">_</span>MIN    :   -32768</div>
<div class="co" style="top:699px">SHRT<span class="u">_</span>MAX    :   32767</div>
<div class="co" style="top:743px">USHRT<span class="u">_</span>MAX   :   65535</div>
<div class="co" style="top:787px">INT<span class="u">_</span>MIN     :   -2147483648</div>
<div class="co" style="top:831px">INT<span class="u">_</span>MAX     :   2147483647</div>
<div class="co" style="top:875px">UINT<span class="u">_</span>MAX    :   4294967295</div>
<div class="co" style="top:919px">LONG<span class="u">_</span>MIN    :   -9223372036854775808</div>
<div class="co" style="top:963px">LONG<span class="u">_</span>MAX    :   9223372036854775807</div>
<div class="co" style="top:1007px">ULONG<span class="u">_</span>MAX   :   18446744073709551615</div>
<div class="co" style="top:1051px">ULLONG<span class="u">_</span>MAX   :  18446744073709551615</div>
<div class="co" style="top:1139px">Storage size for float : 4</div>
<div class="co" style="top:1183px">FLT<span class="u">_</span>MAX     :   3.40282e+38</div>
<div class="co" style="top:1227px">FLT<span class="u">_</span>MIN     :   1.17549e-38</div>
<div class="co" style="top:1271px">-FLT<span class="u">_</span>MAX    :   -3.40282e+38</div>
<div class="co" style="top:1315px">-FLT<span class="u">_</span>MIN    :   -1.17549e-38</div>
<div class="co" style="top:1359px">DBL<span class="u">_</span>MAX     :   1.79769e+308</div>
<div class="co" style="top:1403px">DBL<span class="u">_</span>MIN     :   2.22507e-308</div>
<div class="co" style="top:1447px">-DBL<span class="u">_</span>MAX     :  -1.79769e+308</div>
<div class="co" style="top:1491px">Precision value: 6</div>
<div class="co" style="top:1579px">Process finished with exit code 0</div>
</div>
</div>
<!-- watermarks -->
<div class="abs" style="left:179px;top:1258px;width:364px;height:62px;background:#5fd7fb"></div>
<div class="t" style="left:182px;top:1262px;font-size:47px;line-height:58px;font-weight:bold;color:#0c46a6;-webkit-text-stroke:0;letter-spacing:.8px;font-family:'Liberation Sans','Noto Sans CJK SC',sans-serif">头条@DG数据圈</div>
<div class="t" style="left:2045px;top:1535px;font-size:67px;line-height:90px;font-weight:900;color:#fff;-webkit-text-stroke:0;letter-spacing:0;text-shadow:3px 3px 0 #000;font-family:'Liberation Sans','Noto Sans CJK SC',sans-serif;transform:skewX(-6deg)">头条</div>
<div class="t" style="left:2189px;top:1535px;font-size:68px;line-height:90px;font-weight:400;color:#fff;-webkit-text-stroke:0;text-shadow:3px 3px 0 #000;font-family:'Liberation Sans','Noto Sans CJK SC',sans-serif"><span style="letter-spacing:-1.500px;font-size:73px">@DG</span><span style="letter-spacing:-1px;margin-left:4px">数据圈</span></div>

</div>
</body></html>
